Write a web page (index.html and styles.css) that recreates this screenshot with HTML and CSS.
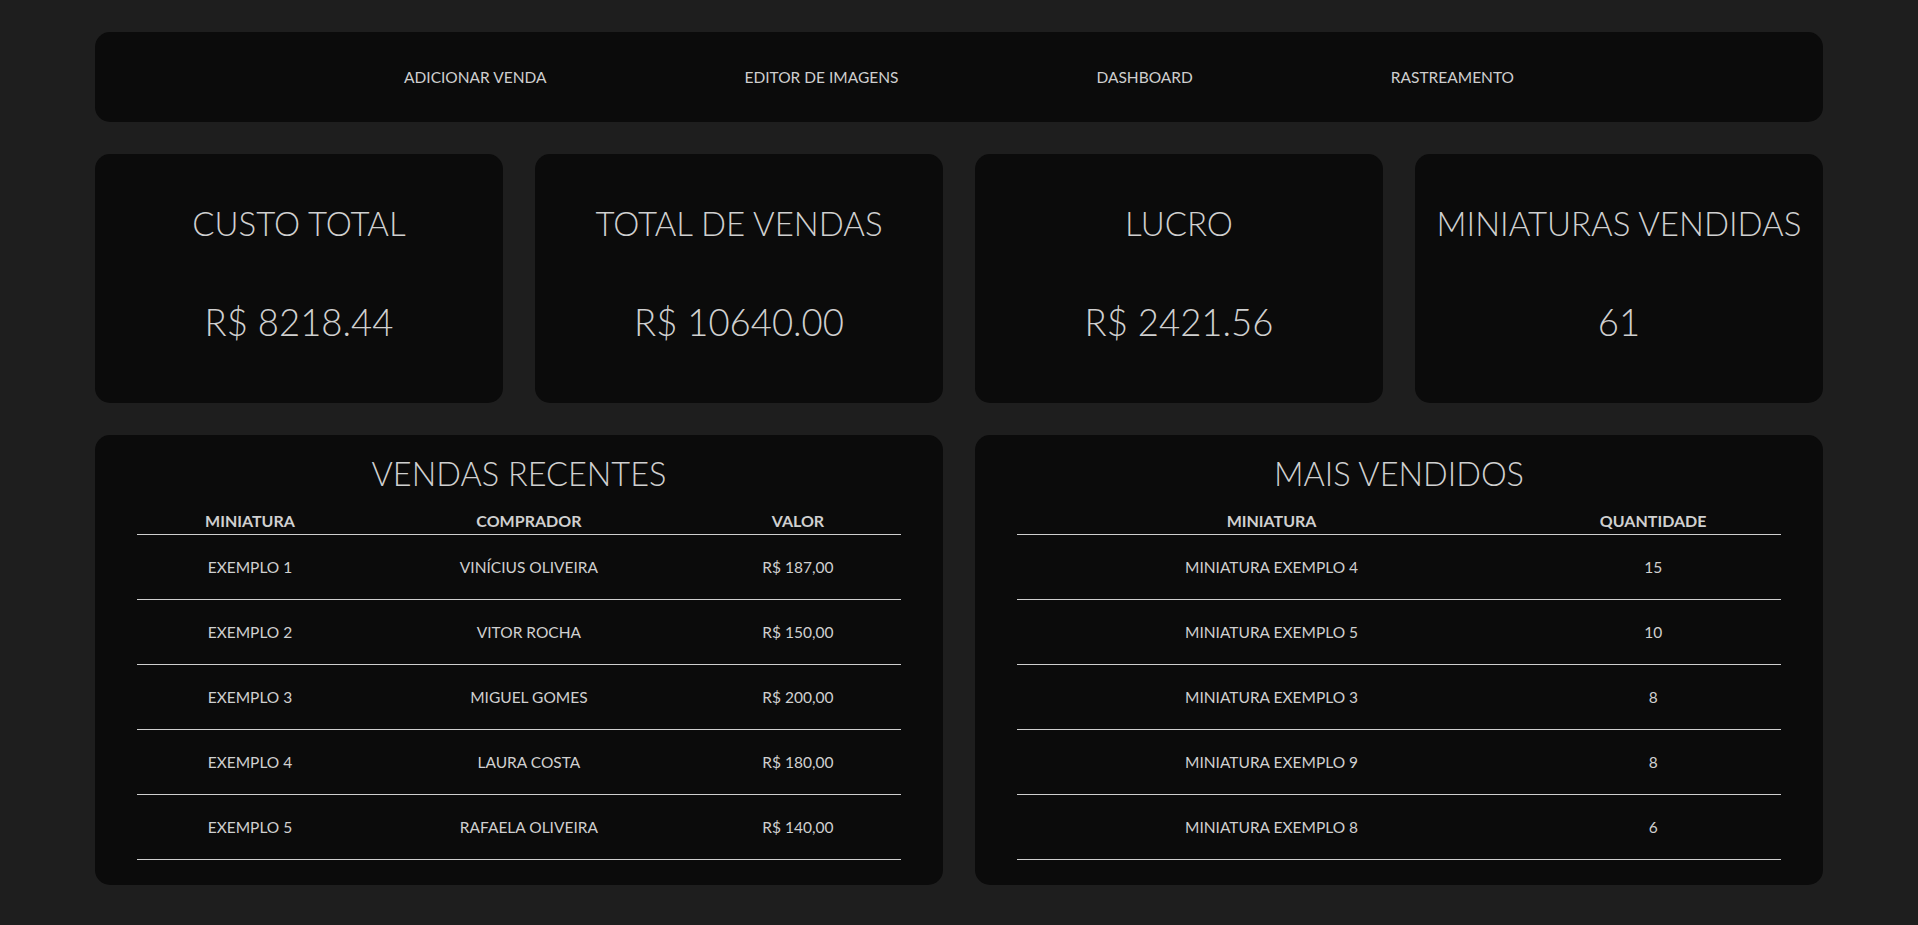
FILE: index.html
```html
<!DOCTYPE html>
<html lang="pt-BR">
<head>
<meta charset="utf-8">
<title>Dashboard</title>
<link rel="stylesheet" href="styles.css">
</head>
<body>
<div class="page">
  <nav class="nav">
    <a class="nav-link" href="#">ADICIONAR VENDA</a>
    <a class="nav-link" href="#">EDITOR DE IMAGENS</a>
    <a class="nav-link" href="#">DASHBOARD</a>
    <a class="nav-link" href="#">RASTREAMENTO</a>
  </nav>

  <section class="stats">
    <div class="card">
      <h2 class="card-title">CUSTO TOTAL</h2>
      <p class="card-value">R$ 8218.44</p>
    </div>
    <div class="card">
      <h2 class="card-title">TOTAL DE VENDAS</h2>
      <p class="card-value">R$ 10640.00</p>
    </div>
    <div class="card">
      <h2 class="card-title">LUCRO</h2>
      <p class="card-value">R$ 2421.56</p>
    </div>
    <div class="card">
      <h2 class="card-title">MINIATURAS VENDIDAS</h2>
      <p class="card-value">61</p>
    </div>
  </section>

  <section class="panels">
    <div class="panel">
      <h2 class="panel-title">VENDAS RECENTES</h2>
      <table class="table recent">
        <thead>
          <tr><th class="c1">MINIATURA</th><th class="c2">COMPRADOR</th><th class="c3">VALOR</th></tr>
        </thead>
        <tbody>
          <tr><td>EXEMPLO 1</td><td>VINÍCIUS OLIVEIRA</td><td>R$ 187,00</td></tr>
          <tr><td>EXEMPLO 2</td><td>VITOR ROCHA</td><td>R$ 150,00</td></tr>
          <tr><td>EXEMPLO 3</td><td>MIGUEL GOMES</td><td>R$ 200,00</td></tr>
          <tr><td>EXEMPLO 4</td><td>LAURA COSTA</td><td>R$ 180,00</td></tr>
          <tr><td>EXEMPLO 5</td><td>RAFAELA OLIVEIRA</td><td>R$ 140,00</td></tr>
        </tbody>
      </table>
    </div>
    <div class="panel">
      <h2 class="panel-title">MAIS VENDIDOS</h2>
      <table class="table best">
        <thead>
          <tr><th class="b1">MINIATURA</th><th class="b2">QUANTIDADE</th></tr>
        </thead>
        <tbody>
          <tr><td>MINIATURA EXEMPLO 4</td><td>15</td></tr>
          <tr><td>MINIATURA EXEMPLO 5</td><td>10</td></tr>
          <tr><td>MINIATURA EXEMPLO 3</td><td>8</td></tr>
          <tr><td>MINIATURA EXEMPLO 9</td><td>8</td></tr>
          <tr><td>MINIATURA EXEMPLO 8</td><td>6</td></tr>
        </tbody>
      </table>
    </div>
  </section>
</div>
</body>
</html>
```

FILE: styles.css
```css
* { box-sizing: border-box; }

html, body {
  margin: 0;
  padding: 0;
  background: #1e1e1e;
}

body {
  font-family: Lato, "Liberation Sans", sans-serif;
  color: #d0d0d0;
}

.page {
  width: 1728px;
  margin: 32px auto 0;
  display: flex;
  flex-direction: column;
  gap: 32px;
}

.nav {
  height: 90px;
  background: #0b0b0b;
  border-radius: 15px;
  display: flex;
  align-items: center;
  justify-content: center;
  gap: 198px;
}

.nav-link {
  color: #cfcfcf;
  text-decoration: none;
  font-size: 15.5px;
  line-height: 18px;
  font-weight: 400;
}

.stats {
  display: grid;
  grid-template-columns: repeat(4, 1fr);
  gap: 32px;
}

.card {
  height: 249px;
  background: #0b0b0b;
  border-radius: 15px;
  display: flex;
  flex-direction: column;
  align-items: center;
  padding-top: 49px;
}

.card-title {
  margin: 0;
  font-size: 33px;
  line-height: 40px;
  font-weight: 300;
  white-space: nowrap;
}

.card-value {
  margin: 56px 0 0;
  font-size: 36.5px;
  line-height: 46px;
  font-weight: 300;
}

.panels {
  display: grid;
  grid-template-columns: 1fr 1fr;
  gap: 32px;
}

.panel {
  height: 450px;
  background: #0b0b0b;
  border-radius: 15px;
  padding-top: 20px;
  display: flex;
  flex-direction: column;
  align-items: center;
}

.panel-title {
  margin: 0 0 18px;
  font-size: 32.5px;
  line-height: 38px;
  font-weight: 300;
}

.table {
  width: 90%;
  border-collapse: collapse;
  table-layout: fixed;
}

.table th {
  font-size: 16px;
  line-height: 20px;
  font-weight: 700;
  padding: 0 0 3px;
  border-bottom: 1px solid #cfcfcf;
  text-align: center;
}

.table td {
  font-size: 15.5px;
  line-height: 18px;
  font-weight: 400;
  padding: 23px 0;
  border-bottom: 1px solid #cfcfcf;
  text-align: center;
}

.c1 { width: 29.5%; }
.c2 { width: 43.6%; }
.c3 { width: 26.9%; }
.b1 { width: 66.6%; }
.b2 { width: 33.4%; }
```
